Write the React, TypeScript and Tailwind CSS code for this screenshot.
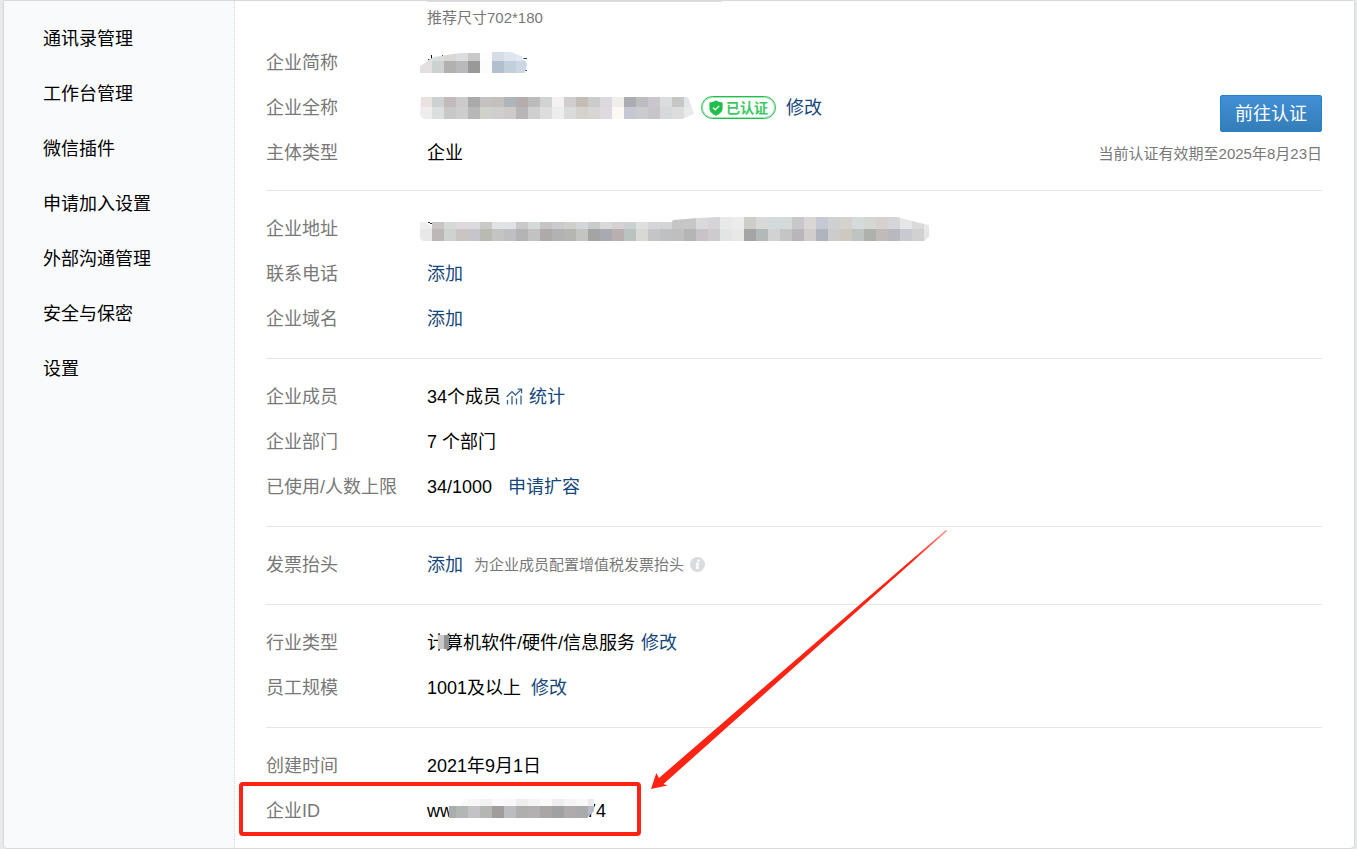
import type { ReactNode } from "react";

const menu = [
  "通讯录管理",
  "工作台管理",
  "微信插件",
  "申请加入设置",
  "外部沟通管理",
  "安全与保密",
  "设置",
];

const shortNameCells = [
  "e4e0e0 dadddd d8d7d6 dcdddf c9c9c9 fdfdfd d6dde7 dfe5ee e4e9f1",
  "e5e0e0 cdd2d1 b2b1af b9b8bb 999a97 fcfcfc b2bfce c1cfdb cbd7e2",
];

const fullNameCells = [
  "e8e2e1 cdd1d1 c1bcbb cacaca a9aaa9 c3c2c0 c4c0be afb4b8 b5adad bcbcbc d1d2d4 f3f1f1 d0cdce c2bdb7 cacccb dcd8dc f1eeec acadb3 bdbcbe c9c7cd dadcdd c6c6c4 e3e6e6",
  "efecee dcdfe0 c8c8c9 cecdce b7b7b5 cfd1cb d0cdce cccac9 b9b4b6 d0cecf dedddd eeeded dcdbdb d5d1cd d8d6d4 dfdadf fcf8f4 c5c7d3 cbcacd c7c5c8 d5d9da dcdcdc e8eaea",
];

const addressCells = [
  "eeeeee c9c5c4 d6dad6 ded9dc dbdbdf c9cac6 e1e2e4 e1e2e5 cac8c8 d6dad6 c5c4c6 cbcacc d0d0ca d4d6dc c9caca d9dad8 d8d1d1 cbd0d0 dfdfdf d5d6d9 d3d4d6 c6c6c4 c7c7c7 dadadd d7d4d7 e8eaea ececec cecdc9 d9d9d9 d4dadb d5d9d8 c8c8cb dad6d3 c6c9d3 cfd0d2 d5d1cd d4dbdc d5d7d3 d6d1ce d5d6d8 e5e6e8 dadada e8e8e8",
  "e8e8e8 bdb8b6 cfd3cf cac4c3 c6c5cb b8bab3 c4c4c2 bfbfc3 b5b4b4 c2c2c2 aeaaaa b2b2b2 b5b5b1 c4c4c2 a4a4a4 a9aab1 b9afb1 bac3c0 d8d9d3 c5c5c9 bfc0c2 bfbfbf b5b5b5 c9c3c8 cdcbce e3e5e5 e8e8e6 a5a5a5 b3b8b9 d2d2d2 c4c6c6 b9b6bb cfcecd b0b4be cccccd cec9bf bdc4c1 aeb2ab c0bbb8 b9b8be c9cad0 d1d1d1 e4e6e6",
];

const idCells = [
  "ffffff f9f9f9 f7f7f8 f2f2f2 fafafa f8f8f9 eeeeee f4f4f4 f9f9f9 eeeeef f5f5f5 f9f9f9 ebebeb",
  "acacac b2b7b6 c3c3c7 b5b5b3 a19d9c bcbdc1 b1aeb0 b2b0b1 a9a6a5 a0a1a3 aeabaa a9aaac b9bbc4",
];

type MosaicProps = {
  id: string;
  cells: string[];
  width: number;
  height: number;
  split: number;
  outline: string;
  offset?: number;
  className?: string;
  children?: ReactNode;
};

// 12px wide blocks in two bands, cut to an outline
const Mosaic = ({ id, cells, width, height, split, outline, offset = 0, className, children }: MosaicProps) => (
  <svg
    width={width}
    height={height}
    viewBox={`0 0 ${width} ${height}`}
    className={`shrink-0 ${className ?? ""}`}
    shapeRendering="crispEdges"
    aria-hidden="true"
  >
    <clipPath id={id}>
      <path d={outline} />
    </clipPath>
    {children}
    <g clipPath={`url(#${id})`}>
      {cells.map((row, r) =>
        row.split(" ").map((color, c) => (
          <rect
            key={`${r}-${c}`}
            x={c * 12 - offset}
            y={r === 0 ? 0 : split}
            width={12}
            height={r === 0 ? split : height - split}
            fill={`#${color}`}
          />
        ))
      )}
    </g>
  </svg>
);

const Section = ({ children, last }: { children: ReactNode; last?: boolean }) => (
  <dl className={last ? "relative pt-[15px]" : "border-b border-[#e4e6e8] pt-[15px] pb-[17px]"}>
    {children}
  </dl>
);

const Row = ({ label, children }: { label: string; children: ReactNode }) => (
  <div className="flex h-[45px] items-center">
    <dt className="w-[161px] shrink-0 text-[#787878]">{label}</dt>
    <dd className="flex items-center whitespace-nowrap">{children}</dd>
  </div>
);

const Action = ({ children, className }: { children: ReactNode; className?: string }) => (
  <a href="#" className={`text-[#14477c] hover:underline ${className ?? ""}`}>
    {children}
  </a>
);

const VerifiedBadge = () => (
  <span className="ml-[7px] flex h-[23px] w-[75px] items-center justify-center gap-[3px] rounded-full border border-[#1fbf4b] text-[14px] leading-5 font-bold text-[#3cc962] inset-ring inset-ring-[#a5e6b7]">
    <svg width="14" height="16" viewBox="0 0 14 16" aria-hidden="true">
      <path
        d="M7 0.3 C8.8 1.7 11 2.4 13.6 2.5 V8.3 C13.6 11.8 10.6 14.3 7 15.7 C3.4 14.3 0.4 11.8 0.4 8.3 V2.5 C3 2.4 5.2 1.7 7 0.3Z"
        fill="#1fbf4b"
      />
      <path d="M4 7.6 L6.3 9.8 L10.2 5.9" fill="none" stroke="#fff" strokeWidth="1.3" />
    </svg>
    已认证
  </span>
);

const ChartIcon = () => (
  <svg width="17" height="17" viewBox="0 0 17 17" fill="none" stroke="#356489" aria-hidden="true">
    <path d="M0.7 8.8 L6 3.6 L9.4 7 L15 1.6" strokeWidth="1.3" />
    <path d="M11.6 1.2 H15.6 V5.2" strokeWidth="1.3" />
    <path d="M1.5 12 V16.5 M6 8 V16.5 M10.5 10.5 V16.5 M15 7.5 V16.5" strokeWidth="1.3" />
  </svg>
);

const InfoIcon = () => (
  <svg width="15" height="15" viewBox="0 0 15 15" className="ml-[6px]" aria-hidden="true">
    <circle cx="7.5" cy="7.5" r="7.5" fill="#dadbdc" />
    <circle cx="8.6" cy="3.7" r="1.2" fill="#fff" />
    <path
      d="M6 6.3 H8.6 L7.5 11 H8.9 M6 6.3 L7.2 6.6 L6.3 11 C6.3 11.7 7.2 11.6 8.9 11"
      fill="none"
      stroke="#fff"
      strokeWidth="1.1"
    />
  </svg>
);

export default function App() {
  return (
    <div className="flex min-h-screen flex-col bg-[#e8e9eb] pt-px pr-[3px] pb-px pl-1 font-['Liberation_Sans','Noto_Sans_CJK_SC',sans-serif] text-[18px] leading-6 text-black">
      <div className="flex grow rounded-b bg-white shadow-[0_0_2px_rgba(0,0,0,0.25)]">
        <nav className="w-[231px] shrink-0 rounded-bl border-r border-dotted border-[#d3d7dc] bg-[#f8fafc] pt-[10px]">
          <ul>
            {menu.map((item) => (
              <li key={item}>
                <a href="#" className="flex h-[55px] items-center pl-[39px]">
                  {item}
                </a>
              </li>
            ))}
          </ul>
        </nav>

        <main className="min-w-0 grow pr-8 pl-[31px]">
          <div className="ml-[161px] w-[295px] border-t border-[#dddddd] pb-[6px] text-[15px] leading-8 text-[#787878]">
            推荐尺寸702*180
          </div>

          <div className="flex items-start border-b border-[#e4e6e8] pb-[15px]">
            <dl className="grow">
              <Row label="企业简称">
                <Mosaic
                  id="short-name"
                  cells={shortNameCells}
                  width={108}
                  height={21}
                  split={9}
                  outline="M0 21 V14 L5 11 L8 8 L14 5 L40 1 H60 V21Z M60 0 H90 L102 4 L107 12 L105 21 H60Z"
                  className="-ml-[7px]"
                >
                  {/* strokes of the name left uncovered */}
                  <path d="M11 3 V8 M8 7 H12 M22 3 V6" stroke="#111" />
                  <path d="M103 6.5 H107 M105 18.5 H107" stroke="#14477c" />
                </Mosaic>
              </Row>
              <Row label="企业全称">
                <Mosaic
                  id="full-name"
                  cells={fullNameCells}
                  width={274}
                  height={22}
                  split={10}
                  outline="M1 0 H268 L274 17 L262 22 H3 L0 18Z"
                  className="-ml-[7px]"
                />
                <VerifiedBadge />
                <Action className="ml-[10px]">修改</Action>
              </Row>
              <Row label="主体类型">企业</Row>
            </dl>
            <div className="mt-[55px] flex flex-col items-end">
              <button
                type="button"
                className="h-[37px] w-[102px] rounded-[2px] border border-[#2283cb] bg-linear-to-b from-[#428fd6] to-[#347db8] text-white"
              >
                前往认证
              </button>
              <p className="mt-[10px] text-[15px] text-[#787878]">当前认证有效期至2025年8月23日</p>
            </div>
          </div>

          <Section>
            <Row label="企业地址">
              <Mosaic
                id="address"
                cells={addressCells}
                width={510}
                height={24}
                split={12}
                outline="M0 5 H6 L12 10 V5 H252 L253 3 L278 1 L300 0 H477 L500 6 L509 8 V20 L504 24 H3 L0 21Z"
                className="-ml-[7px]"
              >
                <path d="M8 5.5 H10 M10 6.5 H12" stroke="#222" />
              </Mosaic>
            </Row>
            <Row label="联系电话">
              <Action>添加</Action>
            </Row>
            <Row label="企业域名">
              <Action>添加</Action>
            </Row>
          </Section>

          <Section>
            <Row label="企业成员">
              34个成员
              <Action className="ml-[5px] flex items-center gap-[6px]">
                <ChartIcon />
                统计
              </Action>
            </Row>
            <Row label="企业部门">7 个部门</Row>
            <Row label="已使用/人数上限">
              34/1000
              <Action className="ml-4">申请扩容</Action>
            </Row>
          </Section>

          <Section>
            <Row label="发票抬头">
              <Action>添加</Action>
              <span className="ml-[11px] text-[15px] text-[#787878]">为企业成员配置增值税发票抬头</span>
              <InfoIcon />
            </Row>
          </Section>

          <Section>
            <Row label="行业类型">
              <span className="relative">
                计算机软件/硬件/信息服务
                <span className="absolute top-1 left-[11px] flex h-[14px]">
                  <span className="w-[6px] bg-[#c9cac8]" />
                  <span className="w-[5px] bg-[#939393]" />
                </span>
              </span>
              <Action className="ml-[6px]">修改</Action>
            </Row>
            <Row label="员工规模">
              1001及以上
              <Action className="ml-[10px]">修改</Action>
            </Row>
          </Section>

          <Section last>
            <Row label="创建时间">2021年9月1日</Row>
            <Row label="企业ID">
              ww
              <Mosaic
                id="corp-id"
                cells={idCells}
                width={145}
                height={19}
                split={7}
                offset={5}
                outline="M0 7 H10 L16 0 H145 V12 L138 19 H0Z"
                className="relative -mr-2 -ml-1 mb-1"
              />
              74
            </Row>
            {/* highlight around the ID row and the arrow pointing at it */}
            <div className="pointer-events-none absolute top-[54px] -left-[27px] h-[54px] w-[402px] rounded-[4px] border-4 border-[#ff2314]" />
            <svg
              width="298"
              height="262"
              viewBox="0 0 298 262"
              className="pointer-events-none absolute bottom-[43px] left-[384px]"
              aria-hidden="true"
            >
              <defs>
                <linearGradient id="arrow-fade" x1="1" y1="0" x2="0" y2="1">
                  <stop offset="0" stopColor="#ff2314" stopOpacity="0.5" />
                  <stop offset="0.12" stopColor="#ff2314" />
                </linearGradient>
              </defs>
              <path
                d="M1 261 L6.3 245 L9 250 L296 2 L297 3 L13.5 256 L17.5 257.5Z"
                fill="url(#arrow-fade)"
              />
            </svg>
          </Section>
        </main>
      </div>
    </div>
  );
}
